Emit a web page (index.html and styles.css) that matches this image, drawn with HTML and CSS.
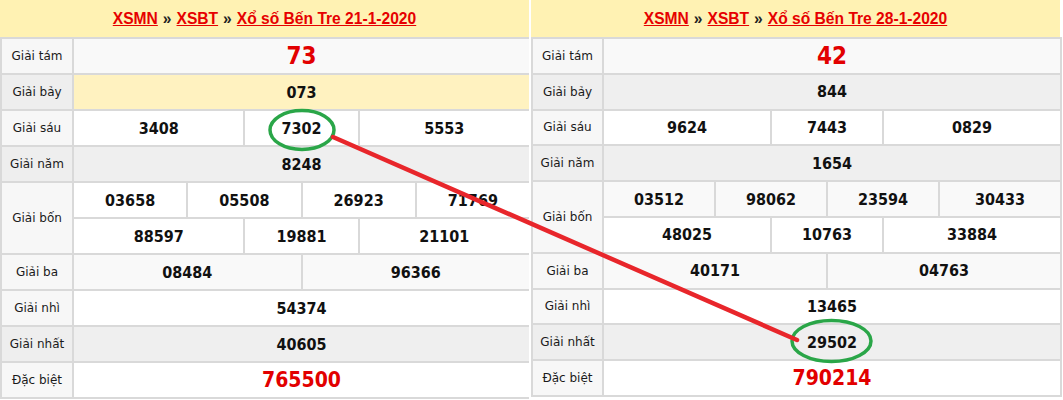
FILE: index.html
```html
<!DOCTYPE html>
<html lang="vi">
<head>
<meta charset="utf-8">
<title>XSBT</title>
<link rel="stylesheet" href="styles.css">
</head>
<body>
<div class="page">
  <section class="panel panel-left">
    <div class="head"><a href="#">XSMN</a> <span class="sep">»</span> <a href="#">XSBT</a> <span class="sep">»</span> <a href="#">Xổ số Bến Tre 21-1-2020</a></div>
    <div class="grid grid-left">
      <div class="lb">Giải tám</div><div class="v c8 big">73</div>
      <div class="lb alt">Giải bảy</div><div class="v c8 hl">073</div>
      <div class="lb">Giải sáu</div><div class="v w c3">3408</div><div class="v w c2">7302</div><div class="v w c3">5553</div>
      <div class="lb alt">Giải năm</div><div class="v c8 alt">8248</div>
      <div class="lb r2">Giải bốn</div><div class="v w c2">03658</div><div class="v w c2">05508</div><div class="v w c2">26923</div><div class="v w c2">71769</div>
      <div class="v w c3">88597</div><div class="v w c2">19881</div><div class="v w c3">21101</div>
      <div class="lb">Giải ba</div><div class="v c4">08484</div><div class="v c4">96366</div>
      <div class="lb">Giải nhì</div><div class="v w c8">54374</div>
      <div class="lb alt">Giải nhất</div><div class="v c8 alt">40605</div>
      <div class="lb">Đặc biệt</div><div class="v w c8 db">765500</div>
    </div>
  </section>
  <section class="panel panel-right">
    <div class="head"><a href="#">XSMN</a> <span class="sep">»</span> <a href="#">XSBT</a> <span class="sep">»</span> <a href="#">Xổ số Bến Tre 28-1-2020</a></div>
    <div class="grid grid-right">
      <div class="lb">Giải tám</div><div class="v c8 big">42</div>
      <div class="lb alt">Giải bảy</div><div class="v c8 alt">844</div>
      <div class="lb">Giải sáu</div><div class="v w c3">9624</div><div class="v w c2">7443</div><div class="v w c3">0829</div>
      <div class="lb alt">Giải năm</div><div class="v c8 alt">1654</div>
      <div class="lb r2">Giải bốn</div><div class="v c2">03512</div><div class="v c2">98062</div><div class="v c2">23594</div><div class="v c2">30433</div>
      <div class="v w c3">48025</div><div class="v w c2">10763</div><div class="v w c3">33884</div>
      <div class="lb">Giải ba</div><div class="v c4">40171</div><div class="v c4">04763</div>
      <div class="lb">Giải nhì</div><div class="v w c8">13465</div>
      <div class="lb alt">Giải nhất</div><div class="v c8 alt">29502</div>
      <div class="lb">Đặc biệt</div><div class="v w c8 db">790214</div>
    </div>
  </section>
  <svg class="overlay" width="1063" height="400" viewBox="0 0 1063 400" aria-hidden="true">
    <ellipse cx="302" cy="130" rx="32" ry="19.5" fill="none" stroke="#2aa648" stroke-width="3.5"/>
    <ellipse cx="831.5" cy="341" rx="39.5" ry="20.5" fill="none" stroke="#2aa648" stroke-width="3.5"/>
    <line x1="333" y1="137" x2="797" y2="340" stroke="#e8262b" stroke-width="4.5" stroke-linecap="round"/>
  </svg>
</div>
</body>
</html>
```

FILE: styles.css
```css
html, body {
  margin: 0;
  padding: 0;
  background: #ffffff;
}
.page {
  position: relative;
  display: flex;
  gap: 2px;
  width: 1063px;
  height: 400px;
  overflow: hidden;
}
.panel {
  display: flex;
  flex-direction: column;
}
.panel-left { width: 529px; }
.panel-right { width: 531px; }
.head {
  height: 37px;
  background: #fff2b3;
  display: flex;
  align-items: center;
  justify-content: center;
  gap: 5px;
  font-family: "Liberation Sans", Arial, sans-serif;
  font-weight: bold;
  font-size: 15.6px;
  padding-top: 1px;
  box-sizing: border-box;
}
.panel-right .head { margin-right: 2px; }
.head a {
  color: #e60000;
  text-decoration: underline;
}
.head .sep { color: #222; }
.grid {
  display: grid;
  gap: 2px;
  background: #d9d9d9;
  padding: 2px 0 2px 2px;
  grid-auto-rows: 34px;
}
.grid-left {
  grid-template-columns: 70px repeat(8, 1fr);
}
.grid-right {
  grid-template-columns: 69px repeat(6, 54fr) 59fr 59fr;
  grid-auto-rows: 33.8px;
  padding-right: 2px;
}
.lb {
  background: #f7f7f7;
  display: flex;
  align-items: center;
  justify-content: center;
  font-family: "DejaVu Sans", Verdana, sans-serif;
  font-size: 12px;
  color: #1a1a1a;
}
.lb.alt { background: #eeeeee; }
.lb.r2 { grid-row: span 2; }
.v {
  background: #f9f9f9;
  display: flex;
  align-items: center;
  justify-content: center;
  font-family: "DejaVu Sans Condensed", "DejaVu Sans", sans-serif;
  font-stretch: condensed;
  font-weight: bold;
  font-size: 16px;
  color: #111;
}
.v.w { background: #ffffff; }
.v.alt { background: #efefef; }
.v.hl { background: #fff2c0; }
.c2 { grid-column: span 2; }
.c3 { grid-column: span 3; }
.c4 { grid-column: span 4; }
.c8 { grid-column: span 8; }
.big {
  font-size: 24px;
  color: #e20000;
}
.db {
  font-size: 21px;
  color: #e20000;
}
.overlay {
  position: absolute;
  left: 0;
  top: 0;
  pointer-events: none;
}
```
